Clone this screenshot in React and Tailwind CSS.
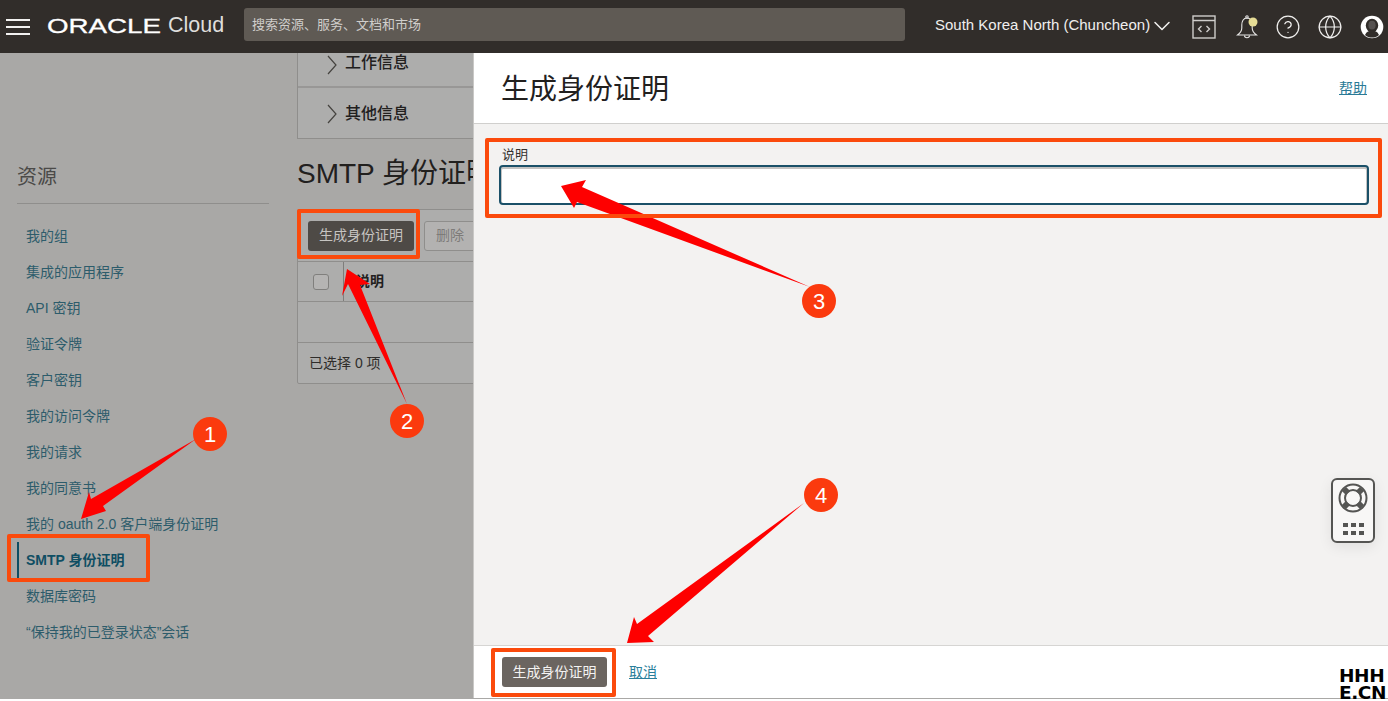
import React from "react";
import { CircleHelp, Globe, ChevronDown } from "lucide-react";

const items = ["我的组","集成的应用程序","API 密钥","验证令牌","客户密钥","我的访问令牌","我的请求","我的同意书","我的 oauth 2.0 客户端身份证明","SMTP 身份证明","数据库密码","“保持我的已登录状态”会话"];

function Chevron() {
  return (
    <svg className="shrink-0" width="10" height="20" viewBox="0 0 10 20" fill="none" stroke="#45433f" strokeWidth="1.2">
      <path d="M1 1l8 9-8 9" />
    </svg>
  );
}

function Header() {
  return (
    <header className="flex h-[53px] items-center bg-[#312d2a] pl-[6px] text-white">
      <div className="flex w-6 flex-col gap-[5px]">
        <span className="h-[2px] bg-[#f2f1f0]" /><span className="h-[2px] bg-[#f2f1f0]" /><span className="h-[2px] bg-[#f2f1f0]" />
      </div>
      <div className="mb-[2px] ml-[17px] w-[121px] origin-left scale-x-[1.32] text-[21px] leading-none whitespace-nowrap text-white [-webkit-text-stroke:0.3px_white]">ORACLE</div>
      <div className="mb-[2px] w-[56px] text-[21.5px] leading-none font-normal text-[#dfdedc]">Cloud</div>
      <div className="mb-[4px] ml-5 flex h-[33px] w-[661px] items-center rounded-[3px] bg-[#5f5a54] pl-2 text-[13px] text-[#d0cecb]">搜索资源、服务、文档和市场</div>
      <div className="mb-[2px] ml-[30px] text-[15px] whitespace-nowrap text-[#f0efee]">South Korea North (Chuncheon)</div>
      <ChevronDown size={28} strokeWidth={1.3} className="mb-[1px] ml-[-2px] text-[#f0efee]" />
      <svg className="ml-[16px]" width="24" height="24" viewBox="0 0 24 24" fill="none" stroke="#cfcdcb" strokeWidth="1.4">
        <rect x="1" y="1" width="22" height="22" /><path d="M1 5.5h22M9.5 11l-3 3 3 3M14.5 11l3 3-3 3" />
      </svg>
      <svg className="ml-[20px]" width="22" height="24" viewBox="0 0 22 24" fill="none" stroke="#e8e7e6" strokeWidth="1.1">
        <path d="M11 3c-3.8 0-5.2 3.5-5.2 7v3c0 3-1.6 5-4.3 7h19c-2.7-2-4.3-4-4.3-7v-3c0-3.5-1.4-7-5.2-7z" />
        <circle cx="11" cy="2" r="1.2" />
        <path d="M8.5 20.5a2.5 2.2 0 0 0 5 0" />
        <circle cx="17" cy="7" r="4.5" fill="#e6dc96" stroke="none" />
      </svg>
      <CircleHelp size={26} strokeWidth={1.15} className="ml-[17px] text-[#f0efee]" />
      <Globe size={26} strokeWidth={1.15} className="ml-[16px] text-[#f0efee]" />
      <svg className="ml-[17px]" width="24" height="24" viewBox="0 0 24 24">
        <circle cx="12" cy="12" r="11.3" fill="#fff" />
        <ellipse cx="12" cy="10.5" rx="6.2" ry="6.8" fill="#312d2a" />
        <ellipse cx="12" cy="10.2" rx="3.6" ry="4.4" fill="#fff" opacity="0.18" />
        <path d="M5 20c1.6-3.4 4-4.4 7-4.4s5.4 1 7 4.4c-2 1.8-4.4 2.6-7 2.6s-5-.8-7-2.6z" fill="#312d2a" />
      </svg>
    </header>
  );
}

function Sidebar() {
  return (
    <aside className="w-[297px] shrink-0 pt-[108px] pl-[17px] pr-[28px]">
      <div className="h-[43px] border-b border-[#8f8e8c] text-[20px] leading-[32px] text-[#4b4a48]">资源</div>
      <ul className="mt-[14px]">
        {items.map((t) => {
          const active = t === "SMTP 身份证明";
          return (
            <li key={t} className={active
              ? "flex h-9 items-center border-l-2 border-[#0f4e63] pt-[1px] pl-[7px] text-[14px] font-bold whitespace-nowrap text-[#0f4e63]"
              : "flex h-9 items-center border-l-2 border-transparent pt-[1px] pl-[7px] text-[14px] whitespace-nowrap text-[#2d5c6b]"}>{t}</li>
          );
        })}
      </ul>
    </aside>
  );
}

function Content() {
  return (
    <section className="w-[600px] shrink-0">
      <div className="border-b border-l border-[#8f8e8c] bg-[#adadac]">
        <div className="flex h-[35px] items-start border-b-2 border-[#989796] pl-[29px] text-[16px] leading-[18px] font-medium text-[#22201e]">
          <span className="mt-[2px]"><Chevron /></span><span className="mt-[1px] ml-[8px]">工作信息</span>
        </div>
        <div className="flex h-[50px] items-center pl-[29px] text-[16px] font-medium text-[#22201e]">
          <span className="mt-[2px]"><Chevron /></span><span className="mt-[2px] ml-[8px]">其他信息</span>
        </div>
      </div>
      <h2 className="mt-[17px] h-9 text-[28px] leading-9 whitespace-nowrap text-[#22201e]">SMTP 身份证明</h2>
      <div className="mt-[17px] rounded-[2px] border border-[#8f8e8c] bg-[#adadac]">
        <div className="flex h-[51px] items-center gap-[10px] pl-[10px]">
          <button className="h-[30px] w-[106px] rounded-[3px] bg-[#4e4a46] text-[14px] text-[#c6c4c1]">生成身份证明</button>
          <button className="h-[30px] w-[52px] rounded-[3px] border border-[#8f8e8c] bg-[#b3b2b1] text-[14px] text-[#7d7b79]">删除</button>
        </div>
        <div className="flex h-[41px] items-center border-t border-b border-[#8f8e8c]">
          <div className="flex h-full w-[46px] items-center justify-center border-r border-[#7e7d7b] pl-[1px]">
            <span className="h-4 w-4 rounded-[3px] border border-[#807f7d] bg-[#b5b4b3]" />
          </div>
          <span className="ml-[12px] text-[14px] font-bold text-[#22201e]">说明</span>
        </div>
        <div className="h-[41px] border-b border-[#8f8e8c]" />
        <div className="flex h-10 items-center pl-[11px] text-[14px] text-[#2f2d2b]">已选择 0 项</div>
      </div>
    </section>
  );
}

function Drawer() {
  return (
    <section className="flex min-w-0 flex-1 flex-col border-l border-[#c9c8c6] bg-[#f3f2f1]">
      <div className="flex h-[71px] items-center justify-between border-b border-[#d0cfcd] bg-white pr-[21px] pl-[27px]">
        <h1 className="mt-[4px] text-[28px] leading-9 text-[#22201e]">生成身份证明</h1>
        <a className="text-[14px] text-[#2a7a96] underline">帮助</a>
      </div>
      <div className="flex-1 pt-[23px] pr-[19px] pl-[25px]">
        <label className="block pl-[3px] text-[13px] leading-4 text-[#33312f]">说明</label>
        <div className="mt-[2px] h-10 rounded-[4px] border-2 border-[#1a5068] bg-white shadow-[inset_0_1px_0_1px_#c4c3c2]" />
      </div>
      <div className="flex h-[53px] items-center border-t border-[#d6d5d3] bg-white pl-[28px]">
        <button className="h-[30px] w-[105px] rounded-[3px] bg-[#6b6560] text-[14px] text-[#f4f3f2]">生成身份证明</button>
        <a className="ml-[22px] text-[14px] text-[#2a7f9b] underline">取消</a>
      </div>
    </section>
  );
}

function Annotations() {
  const box = "absolute rounded-[2px] border-4 border-[#fb4a0c]";
  const badge = "absolute flex h-[34px] w-[34px] items-center justify-center rounded-full bg-[#fb3a0e] text-[22px] text-white";
  return (
    <>
      <svg className="pointer-events-none absolute inset-0" width="1388" height="701" viewBox="0 0 1388 701">
        <g fill="#fe0000">
          <polygon points="196,439 91,499 89,492 81,519 106,511 103,506" />
          <polygon points="407,404 360,285 370,284 347,269 342,296 348,284" />
          <polygon points="810,287 582,187 586,180 561,186 574,208 577,202" />
          <polygon points="804,503 637,624 634,617 627,643 654,642 648,636" />
        </g>
      </svg>
      <div className={`${box} left-[7px] top-[534px] h-[48px] w-[143px]`} />
      <div className={`${box} left-[297px] top-[209px] h-[50px] w-[123px]`} />
      <div className={`${box} left-[485px] top-[138px] h-[80px] w-[897px]`} />
      <div className={`${box} left-[491px] top-[648px] h-[49px] w-[125px]`} />
      <span className={`${badge} left-[193px] top-[417px]`}>1</span>
      <span className={`${badge} left-[390px] top-[404px]`}>2</span>
      <span className={`${badge} left-[802px] top-[284px]`}>3</span>
      <span className={`${badge} left-[804px] top-[478px]`}>4</span>
      <div className="absolute left-[1331px] top-[478px] flex h-[65px] w-[44px] flex-col items-center rounded-[6px] border-2 border-[#555553] bg-[#f8f7f6] pt-[3px] shadow-[0_4px_14px_rgba(0,0,0,0.08)]">
        <svg width="30" height="30" viewBox="0 0 30 30" fill="none" stroke="#555553">
          <circle cx="15" cy="15" r="13.5" strokeWidth="2" />
          <circle cx="15" cy="15" r="8" strokeWidth="2" />
          <path d="M6 6l4 4M24 6l-4 4M6 24l4-4M24 24l-4-4" strokeWidth="6" />
        </svg>
        <div className="mt-[10px] grid grid-cols-3 gap-x-[3px] gap-y-[4px]">
          {[0,1,2,3,4,5].map((i) => <span key={i} className="h-1 w-[5px] bg-[#555553]" />)}
        </div>
      </div>
      <div className="absolute left-[1339px] top-[667px] font-['DejaVu_Sans'] text-[18.5px] leading-[17px] font-bold tracking-[-0.4px] whitespace-nowrap text-black">HHH<br />E.CN</div>
    </>
  );
}

export default function App() {
  return (
    <div className="relative h-[701px] w-[1388px] overflow-hidden bg-white font-['Liberation_Sans','Noto_Sans_CJK_SC',sans-serif]">
      <Header />
      <main className="flex h-[645px]">
        <div className="flex w-[473px] shrink-0 overflow-hidden bg-[#a9a8a6]">
          <Sidebar />
          <Content />
        </div>
        <Drawer />
      </main>
      <div className="h-[3px] border-t border-[#a9a8a6] bg-white" />
      <Annotations />
    </div>
  );
}
